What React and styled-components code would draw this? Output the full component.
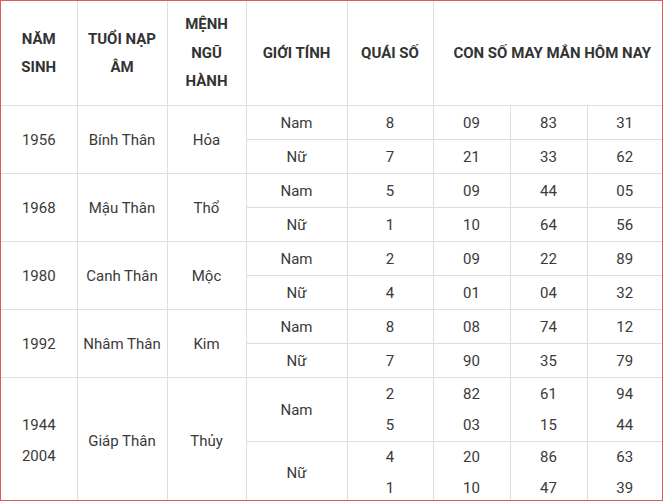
import styled, { createGlobalStyle } from 'styled-components';

const GlobalStyle = createGlobalStyle`
  html, body {
    margin: 0;
    padding: 0;
    background: #fff;
  }
  body {
    font-family: Roboto, "Noto Sans", "Liberation Sans", sans-serif;
    color: #333;
  }
`;

const Frame = styled.div`
  box-sizing: border-box;
  width: 663px;
  height: 501px;
  border: 1px solid #dc5a5a;
  overflow: hidden;
  background: #fff;
`;

const Table = styled.table`
  width: 661px;
  border-collapse: collapse;
  border-style: hidden;
  table-layout: fixed;
  font-size: 15px;
`;

const Head = styled.th`
  border: 1px solid #dedede;
  height: 104px;
  padding: 0 6px 0 ${(p) => p.$indent || 6}px;
  font-weight: 700;
  text-transform: uppercase;
  line-height: 28.5px;
  color: #333;
  text-align: center;
  vertical-align: middle;
`;

const Cell = styled.td`
  border: 1px solid #dedede;
  height: ${(p) => p.$h || 34}px;
  padding: 0 4px;
  text-align: center;
  vertical-align: middle;
  line-height: ${(p) => (p.$stack ? '30.5px' : '20px')};
  color: #3a3a3a;
  box-sizing: border-box;
`;

const widths = [76, 90, 79, 101, 86, 77, 77, 75];

const groups = [
  { year: ['1956'], tuoi: 'Bính Thân', menh: 'Hỏa', rows: [
    { g: 'Nam', q: ['8'], n: [['09', '83', '31']] },
    { g: 'Nữ', q: ['7'], n: [['21', '33', '62']] },
  ] },
  { year: ['1968'], tuoi: 'Mậu Thân', menh: 'Thổ', rows: [
    { g: 'Nam', q: ['5'], n: [['09', '44', '05']] },
    { g: 'Nữ', q: ['1'], n: [['10', '64', '56']] },
  ] },
  { year: ['1980'], tuoi: 'Canh Thân', menh: 'Mộc', rows: [
    { g: 'Nam', q: ['2'], n: [['09', '22', '89']] },
    { g: 'Nữ', q: ['4'], n: [['01', '04', '32']] },
  ] },
  { year: ['1992'], tuoi: 'Nhâm Thân', menh: 'Kim', rows: [
    { g: 'Nam', q: ['8'], n: [['08', '74', '12']] },
    { g: 'Nữ', q: ['7'], n: [['90', '35', '79']] },
  ] },
  { year: ['1944', '2004'], tuoi: 'Giáp Thân', menh: 'Thủy', rows: [
    { g: 'Nam', q: ['2', '5'], n: [['82', '61', '94'], ['03', '15', '44']], h: 64 },
    { g: 'Nữ', q: ['4', '1'], n: [['20', '86', '63'], ['10', '47', '39']], h: 59 },
  ] },
];

function Lines({ items }) {
  return items.map((t, i) => (
    <span key={i}>
      {i > 0 && <br />}
      {t}
    </span>
  ));
}

function App() {
  return (
    <Frame>
      <GlobalStyle />
      <Table>
        <colgroup>
          {widths.map((w, i) => (
            <col key={i} style={{ width: w }} />
          ))}
        </colgroup>
        <thead>
          <tr>
            <Head>Năm<br />sinh</Head>
            <Head>Tuổi nạp<br />âm</Head>
            <Head>Mệnh<br />ngũ<br />hành</Head>
            <Head>Giới tính</Head>
            <Head>Quái số</Head>
            <Head colSpan={3} $indent={15}>Con số may mắn hôm nay</Head>
          </tr>
        </thead>
        <tbody>
          {groups.map((grp) =>
            grp.rows.map((r, ri) => {
              const stack = r.q.length > 1;
              return (
                <tr key={grp.tuoi + ri}>
                  {ri === 0 && (
                    <>
                      <Cell rowSpan={2} $stack={grp.year.length > 1}>
                        <Lines items={grp.year} />
                      </Cell>
                      <Cell rowSpan={2}>{grp.tuoi}</Cell>
                      <Cell rowSpan={2}>{grp.menh}</Cell>
                    </>
                  )}
                  <Cell $h={r.h}>{r.g}</Cell>
                  <Cell $h={r.h} $stack={stack}>
                    <Lines items={r.q} />
                  </Cell>
                  {[0, 1, 2].map((c) => (
                    <Cell key={c} $h={r.h} $stack={stack}>
                      <Lines items={r.n.map((line) => line[c])} />
                    </Cell>
                  ))}
                </tr>
              );
            })
          )}
        </tbody>
      </Table>
    </Frame>
  );
}

export default App;
